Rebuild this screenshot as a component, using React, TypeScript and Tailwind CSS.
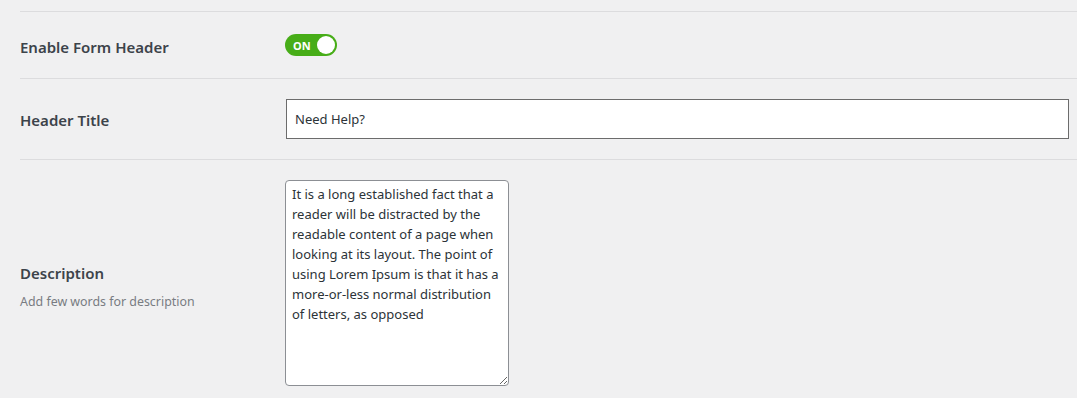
import React from "react";

export default function App() {
  const font = { fontFamily: '"Noto Sans", "Open Sans", sans-serif' };
  return (
    <div className="w-[1077px] h-[398px] bg-[#f0f0f1] overflow-hidden" style={font}>
      <div className="pl-5 pt-[11px]">
        <div className="border-t border-[#dcdcde]" />
        <div className="flex items-center h-[67px] border-b border-[#dcdcde]">
          <div className="w-[265px] pt-[4px] text-[15px] font-semibold text-[#3c434a]">Enable Form Header</div>
          <div className="w-[52px] h-[22px] rounded-full bg-[#47ad18] flex items-center justify-between pl-[8px] pr-[2px]">
            <span className="text-[11px] font-bold text-white leading-none">ON</span>
            <span className="w-[18px] h-[18px] rounded-full bg-white" />
          </div>
        </div>
        <div className="flex items-center py-5 border-b border-[#dcdcde]">
          <div className="w-[266px] pt-[2px] text-[15px] font-semibold text-[#3c434a]">Header Title</div>
          <input
            readOnly
            value="Need Help?"
            className="flex-1 mr-2 h-[40px] bg-white border border-[#6c6c6c] px-2 text-[13px] text-[#2c3338] outline-none"
            style={font}
          />
        </div>
        <div className="flex items-center pt-5">
          <div className="w-[265px] pt-[8px]">
            <div className="text-[15px] font-semibold text-[#3c434a]">Description</div>
            <div className="mt-[9px] text-[12.4px] text-[#787c82]">Add few words for description</div>
          </div>
          <textarea
            readOnly
            className="w-[224px] h-[206px] bg-white border border-[#8c8f94] rounded-[4px] px-[6px] py-[3px] text-[13px] leading-[20px] text-[#2c3338] outline-none resize"
            style={font}
            value="It is a long established fact that a reader will be distracted by the readable content of a page when looking at its layout. The point of using Lorem Ipsum is that it has a more-or-less normal distribution of letters, as opposed"
          />
        </div>
      </div>
    </div>
  );
}
